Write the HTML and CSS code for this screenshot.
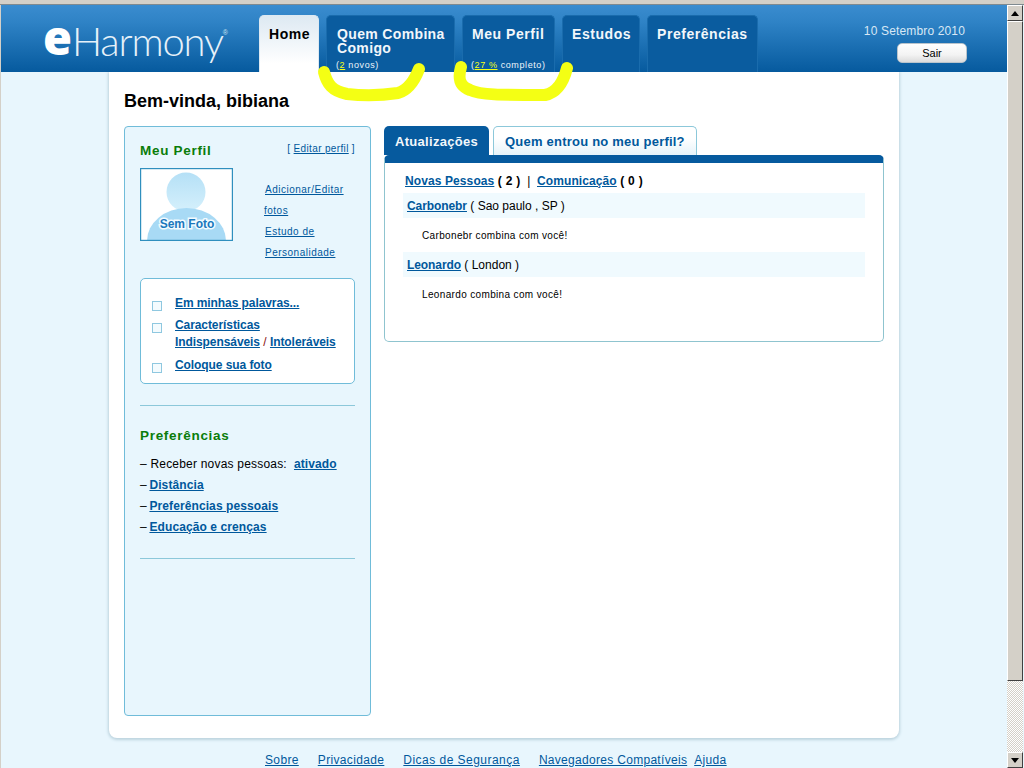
FILE: index.html
```html
<!DOCTYPE html>
<html lang="pt">
<head>
<meta charset="utf-8">
<title>eHarmony</title>
<link rel="stylesheet" href="styles.css">
</head>
<body>
<div class="strip"></div>
<div class="window">
  <div class="page">
    <header class="header">
      <div class="logo"><span class="logo-e">e</span><span class="logo-name">Harmony</span><span class="logo-reg">®</span></div>
      <nav class="nav">
        <a class="tab tab-home"><span class="tab-title">Home</span></a>
        <a class="tab tab-match"><span class="tab-title">Quem Combina<br>Comigo</span><span class="tab-sub">(<u>2</u> novos)</span></a>
        <a class="tab tab-profile"><span class="tab-title">Meu Perfil</span><span class="tab-sub">(<u>27 %</u> completo)</span></a>
        <a class="tab tab-studies"><span class="tab-title">Estudos</span></a>
        <a class="tab tab-prefs"><span class="tab-title">Preferências</span></a>
      </nav>
      <div class="account">
        <div class="date">10 Setembro 2010</div>
        <button class="logout">Sair</button>
      </div>
    </header>
    <main class="card">
      <h1 class="welcome">Bem-vinda, bibiana</h1>
      <div class="columns">
        <aside class="side">
          <div class="side-head">
            <h2 class="green-title">Meu Perfil</h2>
            <span class="edit">[ <a class="link">Editar perfil</a> ]</span>
          </div>
          <div class="photo-row">
            <svg class="avatar" width="93" height="73" viewBox="0 0 93 73">
              <defs>
                <linearGradient id="head" x1="0" y1="0" x2="0" y2="1"><stop offset="0" stop-color="#b5e0f6"/><stop offset="1" stop-color="#d5f0fc"/></linearGradient>
              </defs>
              <rect width="93" height="73" fill="#ffffff"/>
              <circle cx="46" cy="24" r="19.500" fill="url(#head)"/>
              <ellipse cx="46.500" cy="73" rx="39.500" ry="33" fill="#a8daf5"/>
              <text class="avatar-text" x="47" y="60" text-anchor="middle">Sem Foto</text>
              <rect x="0.600" y="0.600" width="91.800" height="71.800" fill="none" stroke="#2f8fbe" stroke-width="1.200"/>
            </svg>
            <div class="photo-links">
              <a class="link">Adicionar/Editar</a><br>
              <a class="link fotos">fotos</a><br>
              <a class="link">Estudo de</a><br>
              <a class="link">Personalidade</a>
            </div>
          </div>
          <div class="todo">
            <div class="todo-item"><span class="check"></span><a class="strong-link">Em minhas palavras...</a></div>
            <div class="todo-item"><span class="check"></span><span><a class="strong-link">Características</a><br><a class="strong-link">Indispensáveis</a> <span class="slash">/</span> <a class="strong-link">Intoleráveis</a></span></div>
            <div class="todo-item"><span class="check"></span><a class="strong-link">Coloque sua foto</a></div>
          </div>
          <hr class="divider first">
          <h2 class="green-title prefs-title">Preferências</h2>
          <ul class="prefs">
            <li>– Receber novas pessoas:&nbsp; <a class="strong-link">ativado</a></li>
            <li>– <a class="strong-link pref-link">Distância</a></li>
            <li>– <a class="strong-link pref-link">Preferências pessoais</a></li>
            <li>– <a class="strong-link pref-link">Educação e crenças</a></li>
          </ul>
          <hr class="divider second">
        </aside>
        <section class="updates">
          <div class="update-tabs">
            <a class="utab utab-on">Atualizações</a>
            <a class="utab utab-off">Quem entrou no meu perfil?</a>
          </div>
          <div class="update-panel">
            <div class="summary"><a class="strong-link">Novas Pessoas</a> <b>( 2 )</b> &nbsp;|&nbsp; <a class="strong-link">Comunicação</a> <b>( 0 )</b></div>
            <div class="person"><a class="strong-link">Carbonebr</a> ( Sao paulo , SP )</div>
            <p class="note">Carbonebr combina com você!</p>
            <div class="person"><a class="strong-link">Leonardo</a> ( London )</div>
            <p class="note">Leonardo combina com você!</p>
          </div>
        </section>
      </div>
    </main>
    <footer class="footer">
      <a class="foot-link">Sobre</a>
      <a class="foot-link">Privacidade</a>
      <a class="foot-link wide">Dicas de Segurança</a>
      <a class="foot-link tight">Navegadores Compatíveis</a>
      <a class="foot-link">Ajuda</a>
    </footer>
  </div>
  <div class="scrollbar">
    <div class="sb-btn"><svg width="8" height="5" viewBox="0 0 8 5"><path d="M4 0L8 5H0Z" fill="#000"/></svg></div>
    <div class="sb-thumb"></div>
    <div class="sb-track"></div>
    <div class="sb-btn"><svg width="8" height="5" viewBox="0 0 8 5"><path d="M0 0H8L4 5Z" fill="#000"/></svg></div>
  </div>
</div>
<svg class="marker" width="1024" height="768" viewBox="0 0 1024 768">
  <path d="M324 72C327 84 332 91 347 94C365 96 385 95 398 93C408 90 414 82 419 69" fill="none" stroke="#f4ff14" stroke-width="12" stroke-linecap="round"/>
  <path d="M461 67C458 78 459 86 470 90C480 95 500 95 545 95C555 93 563 84 567 68" fill="none" stroke="#f4ff14" stroke-width="12" stroke-linecap="round"/>
</svg>
</body>
</html>
```
FILE: styles.css
```css
* { box-sizing: border-box; }
html, body { margin: 0; padding: 0; height: 768px; overflow: hidden; }
body {
  position: relative;
  background: #e8f6fd;
  font-family: "Liberation Sans", Arial, sans-serif;
  font-size: 12px;
  color: #000;
}
a { color: #00589c; text-decoration: underline; }

.strip { height: 5px; background: #d4d0c8; border-bottom: 1px solid #7f8a90; }
.window { display: flex; height: 763px; border-left: 1px solid #d4d0c8; }
.page { flex: 1; min-width: 0; }

.header {
  height: 67px;
  display: flex;
  background: linear-gradient(#3a8ccf 0, #2f83c6 25%, #065a9e 100%);
  position: relative;
  z-index: 2;
}
.logo {
  flex: none;
  width: 258px;
  padding: 7px 0 0 42px;
  color: #fff;
  display: flex;
  align-items: flex-start;
  height: 67px;
  white-space: nowrap;
}
.logo-e { font-family: "Open Sans", sans-serif; font-weight: 800; font-size: 47px; line-height: 50px; }
.logo-name { font-family: "Lato", sans-serif; font-weight: 300; font-size: 40px; line-height: 58px; letter-spacing: -1.200px; color: #e6f1f9; }
.logo-reg { font-size: 7px; line-height: 42px; color: #cfe3f2; }

.nav { flex: none; display: flex; gap: 7px; padding-top: 10px; width: 499px; }
.tab {
  flex: none;
  display: flex;
  flex-direction: column;
  justify-content: space-between;
  height: 57px;
  padding: 11px 0 1px 9px;
  border: 1px solid #1a6cad;
  border-bottom: 0;
  border-radius: 5px 5px 0 0;
  background: #0a5c9f;
  color: #fff;
  text-decoration: none;
}
.tab-title { font-weight: 700; font-size: 14px; line-height: 14px; letter-spacing: 0.55px; color: #f2f7fb; }
.tab-sub { font-size: 9px; line-height: 11px; letter-spacing: 0.6px; color: #eef5fb; margin-left: -1px; }
.tab-sub u { color: #f4ff14; }
.tab-home { width: 60px; background: linear-gradient(#dde9f2 0, #ffffff 85%); border-color: #dde9f2; }
.tab-home .tab-title { color: #000; }
.tab-match { width: 129px; padding-left: 10px; }
.tab-match .tab-title { letter-spacing: 0.35px; }
.tab-profile { width: 93px; }
.tab-studies { width: 78px; }
.tab-prefs { width: 111px; }

.account { flex: none; width: 248px; padding: 0 41px 0 0; text-align: right; }
.date { padding: 19px 0 0; font-size: 12px; line-height: 14px; letter-spacing: 0.15px; color: #d8e8f5; }
.logout {
  display: block;
  margin: 5px -2px 0 auto;
  width: 70px;
  height: 20px;
  padding: 0;
  border: 1px solid #b9c4cc;
  border-radius: 5px;
  background: linear-gradient(#ffffff 0, #f3f3f3 60%, #dcdcdc 100%);
  font: 11px "Liberation Sans", Arial, sans-serif;
  color: #000;
}

.card {
  width: 790px;
  height: 666px;
  margin-left: 108px;
  padding: 19px 15px 0;
  background: #fff;
  border-radius: 0 0 8px 8px;
  box-shadow: 0 1px 3px 1px #bcd3de;
}
.welcome { margin: 0; font-size: 18px; line-height: 21px; font-weight: 700; }
.columns { display: flex; gap: 13px; margin-top: 14px; align-items: flex-start; }

.side {
  flex: none;
  width: 247px;
  height: 590px;
  padding: 15px 15px 0;
  background: #e8f6fd;
  border: 1px solid #70bcd9;
  border-radius: 4px;
}
.side-head { display: flex; justify-content: space-between; align-items: center; height: 18px; }
.green-title { margin: 0; font-size: 13.500px; line-height: 18px; font-weight: 700; letter-spacing: 0.7px; color: #0a7d0a; }
.edit { font-size: 10px; letter-spacing: 0.35px; color: #00589c; margin-top: -6px; }
.photo-row { display: flex; margin-top: 8px; height: 110px; }
.avatar { display: block; flex: none; }
.avatar-text { font: 700 12px "Liberation Sans", Arial, sans-serif; fill: #1b78bd; stroke: #f2fbff; stroke-width: 3px; paint-order: stroke; }
.photo-links { margin-left: 32px; padding-top: 11px; font-size: 10px; line-height: 21px; letter-spacing: 0.5px; }
.fotos { margin-left: -1px; }

.todo {
  height: 106px;
  padding: 16px 11px 0;
  background: #fff;
  border: 1px solid #70bcd9;
  border-radius: 5px;
}
.todo-item { display: flex; line-height: 17px; margin-bottom: 5px; }
.todo-item:last-child { margin-top: 6px; }
.check { flex: none; width: 10px; height: 10px; margin: 6px 13px 0 0; border: 1px solid #8fc8e0; background: #f4fbfe; }
.strong-link { font-weight: 700; letter-spacing: -0.08px; color: #00589c; }
.slash { color: #8a1010; }

.divider { height: 1px; margin: 0; border: 0; background: #8cc8da; }
.first { margin-top: 21px; }
.prefs-title { margin-top: 21px; }
.prefs { list-style: none; margin: 9px 0 0; padding: 0; line-height: 21px; letter-spacing: 0.2px; }
.prefs .strong-link { letter-spacing: 0.1px; }
.prefs .pref-link { margin-left: -1px; }
.second { margin-top: 20px; }

.updates { flex: none; width: 500px; }
.update-tabs { display: flex; gap: 4px; height: 29px; }
.utab { display: block; height: 29px; font-weight: 700; font-size: 13px; line-height: 31px; letter-spacing: 0.3px; text-decoration: none; border-radius: 5px 5px 0 0; }
.utab-on { width: 105px; padding-left: 11px; background: #065a9e; color: #f2f7fb; }
.utab-off { width: 204px; padding-left: 11px; border: 1px solid #8cc8da; border-bottom: 0; background: linear-gradient(#ffffff 40%, #e6f3f9 100%); color: #00589c; line-height: 29px; letter-spacing: 0.22px; }
.update-panel {
  height: 187px;
  padding: 9px 18px 0;
  border: 1px solid #8fc4cf;
  border-top: 8px solid #065a9e;
  border-radius: 5px;
}
.summary { line-height: 18px; padding-left: 2px; }
.summary b { letter-spacing: 0.3px; }
.summary .strong-link { letter-spacing: 0.1px; }
.person { height: 25px; margin-top: 3px; padding-left: 4px; line-height: 27px; background: #f0fafe; }
.note { margin: 0 0 0 19px; font-size: 10px; line-height: 36px; height: 31px; letter-spacing: 0.35px; }

.footer { display: flex; gap: 19px; margin: 12px 0 0 264px; line-height: 20px; }
.foot-link { letter-spacing: 0.35px; }
.wide { letter-spacing: 0.47px; }
.tight { margin-right: -12px; letter-spacing: 0.3px; }

.scrollbar {
  flex: none;
  width: 16px;
  margin-right: 1px;
  display: flex;
  flex-direction: column;
  background: #d4d0c8;
}
.sb-btn {
  flex: none;
  height: 16px;
  display: flex;
  align-items: center;
  justify-content: center;
  background: #d4d0c8;
  border: 1px solid;
  border-color: #fff #404040 #404040 #fff;
}
.sb-thumb { flex: none; height: 660px; background: #d4d0c8; border: 1px solid; border-color: #fff #404040 #404040 #fff; }
.sb-track { flex: 1; background: repeating-conic-gradient(#d4d0c8 0 25%, #ffffff 0 50%) 0 0 / 2px 2px; }

.marker { position: absolute; left: 0; top: 0; z-index: 5; pointer-events: none; }
```
